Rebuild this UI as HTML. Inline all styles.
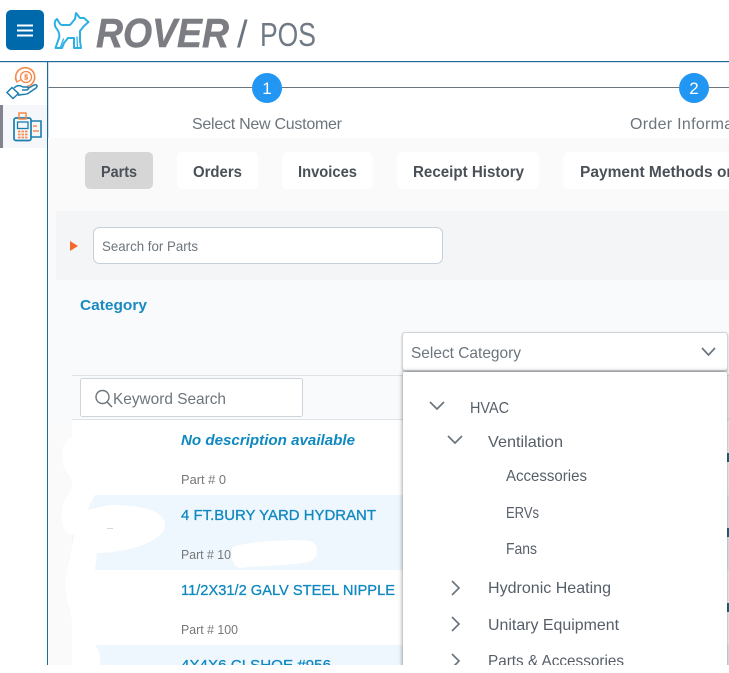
<!DOCTYPE html>
<html lang="en">
<head>
<meta charset="utf-8">
<title>ROVER / POS</title>
<style>
html,body{margin:0;padding:0;background:#fff;width:729px;height:673px;overflow:hidden}
svg{display:block}
text{font-family:"Liberation Sans",Arial,sans-serif;white-space:pre}
.tab{font-size:15.5px;font-weight:700;fill:#495057}
.lbl{font-size:16px;fill:#6c757d}
.ph{font-size:16px;fill:#6c757d}
.tree{font-size:16px;fill:#565e68}
.title{font-size:15px;fill:#1088c0;stroke:#1088c0;stroke-width:.3}
.part{font-size:13px;fill:#777}
.chev{fill:none;stroke:#6c757d;stroke-width:1.7}
</style>
</head>
<body>
<svg xmlns="http://www.w3.org/2000/svg" width="729" height="673" viewBox="0 0 729 673">
  <!-- header -->
  <rect width="729" height="673" fill="#fff"/>
  <rect x="6" y="10" width="38" height="40" rx="5" fill="#0069ab"/>
  <path d="M17 25.500H33M17 30.500H33M17 35.500H33" stroke="#fff" stroke-width="2"/>
  <g fill="none" stroke="#2cb0e4" stroke-width="2" stroke-linejoin="round" stroke-linecap="round">
    <path d="M57 19C54 21 54 26 57 29C59 32 60 35 59 38L55.500 48H62L64 43L68 38H74L74 48H81L80 41V31L84 26L88.500 22L84 18H80L76 13L75 19L70 25H62C60 25 59 22 57 19Z"/>
    <path d="M60.500 47L63.500 39M77.500 48L77 37" stroke-width="1.300"/>
  </g>
  <text x="96" y="47" font-size="41" font-weight="700" font-style="italic" fill="#7c7d82" stroke="#7c7d82" stroke-width=".5" textLength="133" lengthAdjust="spacingAndGlyphs">ROVER</text>
  <text x="237" y="47" font-size="38" fill="#6b7480">/</text>
  <text x="260" y="46" font-size="33" fill="#6f7a85" textLength="56" lengthAdjust="spacingAndGlyphs">POS</text>
  <rect x="0" y="61" width="729" height="1.2" fill="#1f6a9c"/>

  <!-- sidebar -->
  <rect x="0" y="105" width="47" height="43" fill="#f5f7fa"/>
  <rect x="0" y="105" width="3" height="43" fill="#83838f"/>
  <g fill="none" stroke-width="1.3">
    <path d="M17 82A9.500 9.500 0 1 1 27 86.500" stroke="#f58a4b" stroke-width="1.600"/>
    <path d="M15 78L17 82L21 79.500" stroke="#f58a4b"/>
    <circle cx="26" cy="77" r="5.500" stroke="#f58a4b"/>
    <path d="M28 75H25V77H27.500V79H24M26 73.500V80.500" stroke="#f58a4b" stroke-width=".9"/>
    <path d="M14 88C17 85 20 85 23 87H27C29 87 29 90 26 90H22M28 88.500L34 85C37 84 38 86 36 88L28 93.500C25 95 21 94 18 95.500" stroke="#1a7eaf" stroke-width="1.500"/>
    <path d="M12 87.500L18.500 93.500L13 98.500L7 92.500Z" stroke="#1a7eaf" stroke-width="1.500"/>
    <rect x="14" y="118" width="17" height="22.500" rx="2" stroke="#1a7eaf" stroke-width="1.700"/>
    <rect x="19" y="113" width="7" height="6" stroke="#f58a4b" stroke-width="1.500"/>
    <rect x="17.500" y="122" width="10.500" height="6.500" stroke="#1a7eaf" stroke-width="1.300"/>
    <path d="M31 121H41V137H31" stroke="#1a7eaf" stroke-width="1.600"/>
    <path d="M33 126H37M33 131H39" stroke="#f58a4b" stroke-width="1.400"/>
    <path d="M18 131.500H28M18 134.500H28M18 137.500H28" stroke="#f58a4b" stroke-width="1.800" stroke-dasharray="2.500 1"/>
  </g>
  <rect x="47" y="61" width="1.2" height="604" fill="#1f6a9c"/>

  <!-- stepper -->
  <path d="M48.500 87.500H252M282 87.500H679M709 87.500H729" stroke="#6c757d" stroke-width="1"/>
  <circle cx="267" cy="88" r="15" fill="#2196f3"/>
  <circle cx="694" cy="88" r="15" fill="#2196f3"/>
  <text x="267" y="94" font-size="17" fill="#fff" text-anchor="middle">1</text>
  <text x="694" y="94" font-size="17" fill="#fff" text-anchor="middle">2</text>
  <text class="lbl" x="192" y="129" textLength="150">Select New Customer</text>
  <text class="lbl" x="630" y="129" letter-spacing=".3">Order Information</text>

  <!-- tabs band -->
  <rect x="48" y="138" width="681" height="73" fill="#fafafa"/>
  <rect x="85" y="152" width="68" height="37" rx="5" fill="#d6d6d6"/>
  <rect x="177" y="152" width="81" height="37" rx="5" fill="#fff"/>
  <rect x="282" y="152" width="91" height="37" rx="5" fill="#fff"/>
  <rect x="397" y="152" width="142" height="37" rx="5" fill="#fff"/>
  <rect x="563" y="152" width="180" height="37" rx="5" fill="#fff"/>
  <text class="tab" x="101" y="177" textLength="36" lengthAdjust="spacingAndGlyphs">Parts</text>
  <text class="tab" x="193" y="177" textLength="49" lengthAdjust="spacingAndGlyphs">Orders</text>
  <text class="tab" x="298" y="177" textLength="59" lengthAdjust="spacingAndGlyphs">Invoices</text>
  <text class="tab" x="413" y="177" textLength="111" lengthAdjust="spacingAndGlyphs">Receipt History</text>
  <text class="tab" x="580" y="177">Payment Methods on File</text>

  <!-- content background -->
  <rect x="48" y="211" width="681" height="454" fill="#f9fafb"/>
  <rect x="48" y="211" width="8" height="69" fill="#fafafa"/>
  <rect x="56" y="211" width="673" height="69" fill="#f4f5f6"/>
  <path d="M70 241L78 246L70 251Z" fill="#f4682a"/>
  <rect x="93.500" y="227.500" width="349" height="36" rx="6" fill="#fff" stroke="#c5d0da"/>
  <text x="102" y="251" font-size="14" fill="#6c757d" textLength="96" lengthAdjust="spacingAndGlyphs">Search for Parts</text>
  <text x="80" y="310" font-size="15" font-weight="700" fill="#1a8ac0" textLength="67" lengthAdjust="spacingAndGlyphs">Category</text>

  <!-- table toolbar -->
  <rect x="72" y="375" width="657" height="1" fill="#dee2e6"/>
  <rect x="72" y="419" width="657" height="1" fill="#dee2e6"/>
  <rect x="80.500" y="378.500" width="222" height="38" rx="2" fill="#fff" stroke="#ced4da"/>
  <circle cx="102.500" cy="397" r="6.500" fill="none" stroke="#6c757d" stroke-width="1.400"/>
  <path d="M107 402L112 407" stroke="#6c757d" stroke-width="1.500"/>
  <text class="ph" x="113" y="404" textLength="113" lengthAdjust="spacingAndGlyphs">Keyword Search</text>

  <!-- rows -->
  <rect x="48" y="420" width="24" height="245" fill="#fafafa"/>
  <rect x="72" y="420" width="657" height="75" fill="#fff"/>
  <rect x="72" y="495" width="657" height="75" fill="#eef7fe"/>
  <rect x="72" y="570" width="657" height="75" fill="#fff"/>
  <rect x="72" y="645" width="657" height="20" fill="#eef7fe"/>
  <path d="M72 420V438C64 440 60 450 64 468L72 480V488C66 498 60 505 62 520C63 532 68 535 74 535C72 550 68 565 65 580C64 595 70 605 72 620V665H100C101 655 98 648 95 645H72V570H95L97 553C130 553 165 540 165 525C165 510 140 505 110 505L87 510L95 495H72Z" fill="#fff"/>
  <path d="M232 548C240 541 300 539 310 541C320 545 320 558 308 562C290 566 250 566 240 568C232 566 230 554 232 548Z" fill="#fff"/>
  <rect x="107" y="528" width="6" height="1" fill="#d5d8da"/>
  <text x="181" y="445" font-size="15" font-weight="700" font-style="italic" fill="#1088c0" textLength="174" lengthAdjust="spacingAndGlyphs">No description available</text>
  <text class="part" x="181" y="484" textLength="45" lengthAdjust="spacingAndGlyphs">Part # 0</text>
  <text class="title" x="181" y="520" textLength="195" lengthAdjust="spacingAndGlyphs">4 FT.BURY YARD HYDRANT</text>
  <text class="part" x="181" y="559" textLength="50" lengthAdjust="spacingAndGlyphs">Part # 10</text>
  <text class="title" x="181" y="595" textLength="214" lengthAdjust="spacingAndGlyphs">11/2X31/2 GALV STEEL NIPPLE</text>
  <text class="part" x="181" y="634" textLength="57" lengthAdjust="spacingAndGlyphs">Part # 100</text>
  <text class="title" x="181" y="670" textLength="150" lengthAdjust="spacingAndGlyphs">4X4X6 CI SHOE #956</text>
  <path d="M728 453V462M728 528V537M728 603V612" stroke="#1a6f8f" stroke-width="2"/>

  <!-- dropdown -->
  <rect x="402.500" y="332.500" width="325" height="38" rx="3" fill="#fff" stroke="#ced4da" style="filter:drop-shadow(0 1px 1px rgba(0,0,0,.25))"/>
  <text class="ph" x="411" y="358" textLength="110" lengthAdjust="spacingAndGlyphs">Select Category</text>
  <path class="chev" d="M702 348L708.500 355L715 348"/>
  <rect x="403" y="372" width="324" height="310" rx="2" fill="#fff" style="filter:drop-shadow(0 0 2.500px rgba(0,0,0,.5))"/>
  <path class="chev" d="M430 402L437 409L444 402"/>
  <text class="tree" x="470" y="413" textLength="39" lengthAdjust="spacingAndGlyphs">HVAC</text>
  <path class="chev" d="M448 436L455 443L462 436"/>
  <text class="tree" x="488" y="447" textLength="75" lengthAdjust="spacingAndGlyphs">Ventilation</text>
  <text class="tree" x="506" y="481" textLength="81" lengthAdjust="spacingAndGlyphs">Accessories</text>
  <text class="tree" x="506" y="518" textLength="33" lengthAdjust="spacingAndGlyphs">ERVs</text>
  <text class="tree" x="506" y="554" textLength="31" lengthAdjust="spacingAndGlyphs">Fans</text>
  <path class="chev" d="M452 581L459 588L452 595"/>
  <text class="tree" x="488" y="593" textLength="123" lengthAdjust="spacingAndGlyphs">Hydronic Heating</text>
  <path class="chev" d="M452 617L459 624L452 631"/>
  <text class="tree" x="488" y="630" textLength="131" lengthAdjust="spacingAndGlyphs">Unitary Equipment</text>
  <path class="chev" d="M452 654L459 661L452 668"/>
  <text class="tree" x="488" y="666" textLength="136" lengthAdjust="spacingAndGlyphs">Parts &amp; Accessories</text>

  <!-- bottom clip -->
  <rect x="0" y="665" width="729" height="8" fill="#fff"/>
</svg>
</body>
</html>
